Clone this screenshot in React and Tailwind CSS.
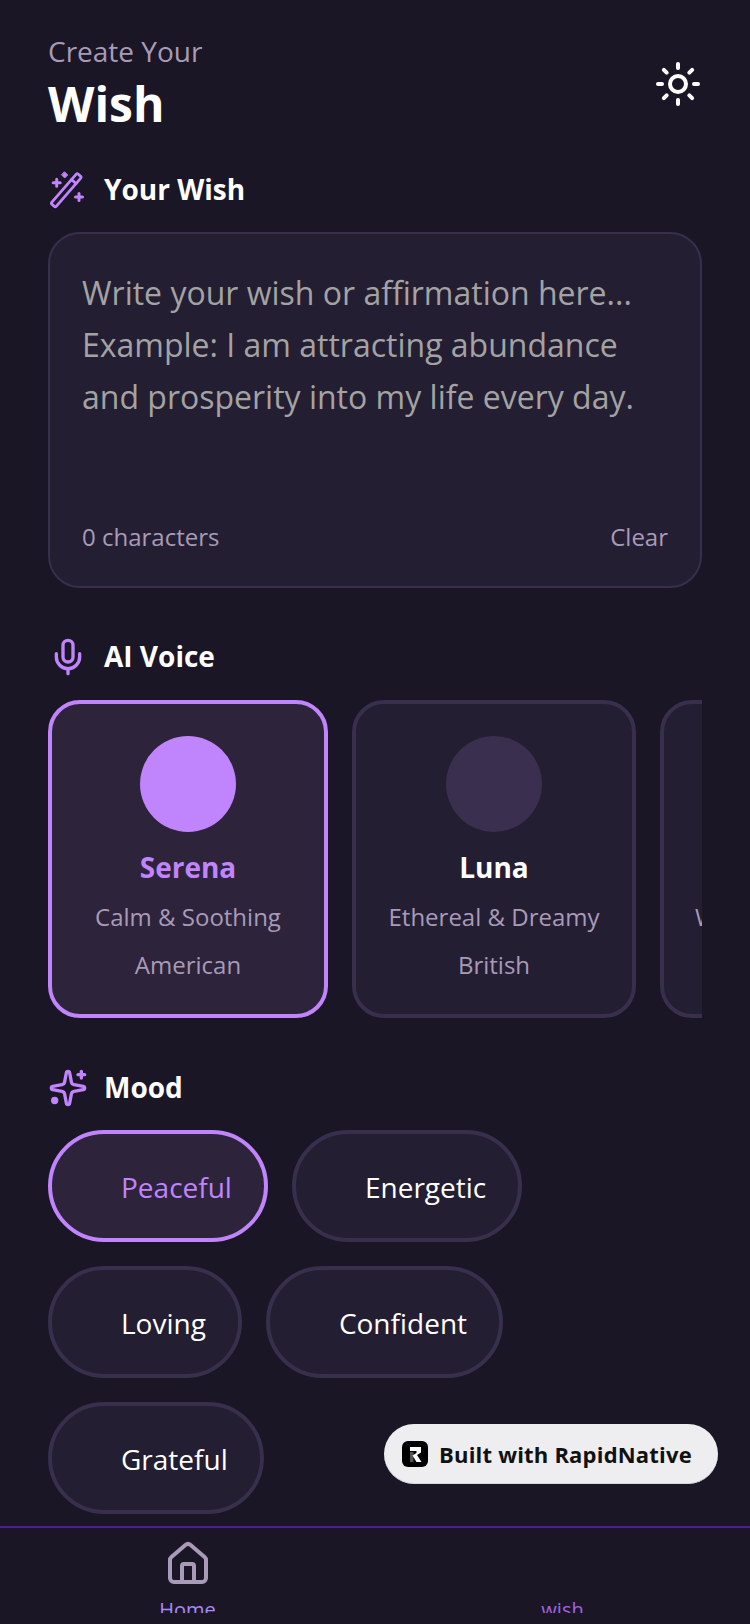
import { House, Mic, Sun } from "lucide-react";

const font = "font-['Open_Sans',sans-serif]";

const WandIcon = () => (
    <svg width="40" height="40" viewBox="0 0 40 40" fill="none" stroke="#c084fc" strokeWidth="2.8" strokeLinecap="round" strokeLinejoin="round">
        <g transform="translate(18.25 20.25) rotate(-49)">
            <rect x="-20" y="-3" width="40" height="6" rx="1.6" />
            <path d="M11.5 -3v6" />
        </g>
        <path d="M8.7 9.2v7M5.2 12.7h7M31 23.5v7M27.5 27h7" strokeWidth="3" />
        <path d="M16.7 2l3 3-3 3-3-3z" fill="#c084fc" strokeWidth="1" />
    </svg>
);

const SparkIcon = () => (
    <svg width="40" height="40" viewBox="0 0 24 24" fill="none" stroke="#c084fc" strokeWidth="2" strokeLinecap="round" strokeLinejoin="round">
        <path d="M11.017 2.814a1 1 0 0 1 1.966 0l1.051 5.558a2 2 0 0 0 1.594 1.594l5.558 1.051a1 1 0 0 1 0 1.966l-5.558 1.051a2 2 0 0 0-1.594 1.594l-1.051 5.558a1 1 0 0 1-1.966 0l-1.051-5.558a2 2 0 0 0-1.594-1.594l-5.558-1.051a1 1 0 0 1 0-1.966l5.558-1.051a2 2 0 0 0 1.594-1.594z" />
        <path d="M20 2v4M22 4h-4" />
        <circle cx="4" cy="19.5" r="1.2" fill="#c084fc" />
    </svg>
);

const MicIcon = () => <Mic size={40} strokeWidth={2} className="text-[#c084fc]" />;

const SectionTitle = ({ icon: Icon, label }) => (
    <div className="flex items-center h-10">
        <div className="w-[40px] flex justify-start">
            <Icon />
        </div>
        <span className="ml-4 pb-[2px] text-[28px] font-bold text-white leading-10">{label}</span>
    </div>
);

const VoiceCard = ({ name, desc, accent, active, width }) => (
    <div
        className={`shrink-0 ${width} h-[318px] rounded-[32px] border-4 pt-8 flex flex-col items-center ${
            active ? "bg-[#2d233b] border-[#c084fc]" : "bg-[#241e33] border-[#372f4c]"
        }`}
    >
        <div className={`w-24 h-24 rounded-full ${active ? "bg-[#c084fc]" : "bg-[#3a2f4f]"}`}></div>
        <div className={`mt-[15px] text-[28px] font-bold leading-[40px] ${active ? "text-[#c084fc]" : "text-white"}`}>{name}</div>
        <div className="mt-[6px] text-[24px] leading-[48px] text-[#a89bb8] whitespace-nowrap">{desc}</div>
        <div className="text-[24px] leading-[48px] text-[#a89bb8] whitespace-nowrap">{accent}</div>
    </div>
);

const Pill = ({ label, active }) => (
    <div
        className={`h-[112px] rounded-full border-4 pl-[69px] pr-8 pt-[2px] flex items-center text-[28px] ${
            active ? "bg-[#2d233b] border-[#c084fc] text-[#c084fc]" : "bg-[#241e33] border-[#372f4c] text-white"
        }`}
    >
        {label}
    </div>
);

const App = () => {
    return (
        <div className={`relative w-[750px] h-[1624px] overflow-hidden bg-[#1a1625] flex flex-col ${font}`}>
            <div className="h-[1526px] overflow-hidden px-12 pt-[31px]">
                <div className="flex items-center justify-between">
                    <div>
                        <div className="text-[28px] leading-[40px] text-[#a89bb8]">Create Your</div>
                        <div className="mt-px text-[48px] leading-[64px] font-bold text-white">Wish</div>
                    </div>
                    <Sun size={48} strokeWidth={2} className="text-white mr-0" />
                </div>

                <div className="mt-[34px]">
                    <SectionTitle icon={WandIcon} label="Your Wish" />
                </div>
                <div className="mt-[22px] h-[356px] rounded-[32px] border-2 border-[#372f4c] bg-[#241e33] px-8 pt-[33px] pb-[31px] flex flex-col justify-between">
                    <div className="text-[32px] leading-[52px] text-[#a3a3a3]">
                        Write your wish or affirmation here...
                        <br />
                        Example: I am attracting abundance
                        <br />
                        and prosperity into my life every day.
                    </div>
                    <div className="flex justify-between text-[24px] leading-[36px] text-[#a89bb8]">
                        <span>0 characters</span>
                        <span>Clear</span>
                    </div>
                </div>

                <div className="mt-[49px]">
                    <SectionTitle icon={MicIcon} label="AI Voice" />
                </div>
                <div className="mt-[23px] flex gap-6 overflow-hidden">
                    <VoiceCard name="Serena" desc="Calm & Soothing" accent="American" active width="w-[280px]" />
                    <VoiceCard name="Luna" desc="Ethereal & Dreamy" accent="British" width="w-[284px]" />
                    <VoiceCard name="Nova" desc="Warm & Comforting" accent="Australian" width="w-[294px]" />
                </div>

                <div className="mt-[50px]">
                    <SectionTitle icon={SparkIcon} label="Mood" />
                </div>
                <div className="mt-[22px] flex flex-wrap gap-6">
                    <Pill label="Peaceful" active />
                    <Pill label="Energetic" />
                    <Pill label="Loving" />
                    <Pill label="Confident" />
                    <Pill label="Grateful" />
                </div>
            </div>

            <div className="flex-1 border-t-2 border-[#4c1d95] flex overflow-hidden">
                <div className="w-1/2 h-[85px] overflow-hidden flex flex-col items-center pt-3">
                    <House size={48} strokeWidth={2} className="text-[#a89bb8] shrink-0" />
                    <span className="mt-2 text-[20px] leading-[28px] text-[#a78bfa]">Home</span>
                </div>
                <div className="w-1/2 h-[85px] overflow-hidden flex flex-col items-center pt-3">
                    <div className="w-12 h-12 shrink-0"></div>
                    <span className="mt-2 text-[20px] leading-[28px] text-[#a463e0]">wish</span>
                </div>
            </div>

            <div className="absolute left-[384px] top-[1424px] w-[334px] h-[60px] rounded-full bg-[#eeeef0] border-b border-[#d8d8dc] flex items-center pl-[18px]">
                <div className="w-[26px] h-[26px] rounded-md bg-black">
                    <svg width="26" height="26" viewBox="0 0 26 26">
                        <path d="M8 11h3.5v10H8z" fill="#555" />
                        <path d="M8 6h11v5.5l-4 2.5 4.5 7h-5l-4-6.5 4-2.5V10H8z" fill="#fff" />
                    </svg>
                </div>
                <span className="ml-[11px] text-[22px] font-bold text-[#111] leading-none tracking-[0.2px]">Built with RapidNative</span>
            </div>
        </div>
    );
};

export default App;
